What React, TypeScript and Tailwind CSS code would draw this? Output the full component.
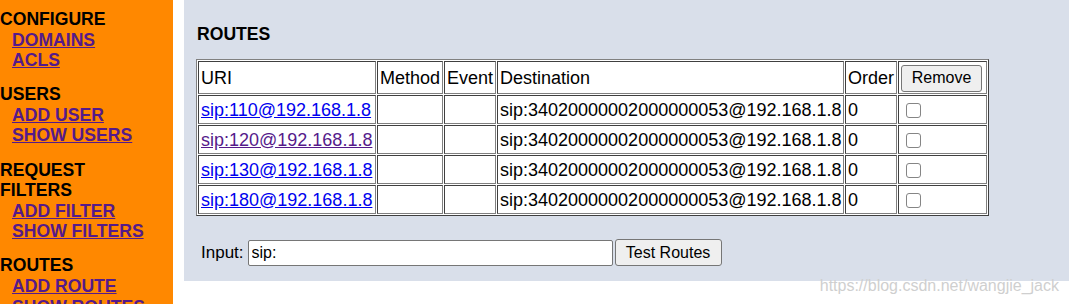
import React from 'react';

const groups = [
  { title: ['CONFIGURE'], links: ['DOMAINS', 'ACLS'] },
  { title: ['USERS'], links: ['ADD USER', 'SHOW USERS'] },
  { title: ['REQUEST', 'FILTERS'], links: ['ADD FILTER', 'SHOW FILTERS'] },
  { title: ['ROUTES'], links: ['ADD ROUTE', 'SHOW ROUTES'] },
];

const routes = [
  { uri: 'sip:110@192.168.1.8', visited: false },
  { uri: 'sip:120@192.168.1.8', visited: true },
  { uri: 'sip:130@192.168.1.8', visited: false },
  { uri: 'sip:180@192.168.1.8', visited: false },
];

const dest = 'sip:34020000002000000053@192.168.1.8';

// inset grey borders, like an old border=1 table
const cell = 'border border-t-[#404040] border-l-[#404040] border-r-[#808080] border-b-[#808080] bg-white px-[2px] py-0 align-middle';

export default function App() {
  return (
    <div className="relative flex h-[304px] w-[1069px] overflow-hidden bg-white font-['Liberation_Sans',Arial,sans-serif] text-black">
      <nav className="w-[173px] shrink-0 bg-[#ff8800] pt-[9px] text-[17.6px] font-bold leading-[20.6px]">
        {groups.map((g, i) => (
          <div key={i} className={i > 0 ? 'mt-[13.5px]' : ''}>
            {g.title.map(t => <div key={t}>{t}</div>)}
            {g.links.map(l => (
              <div key={l} className="pl-[12px]">
                <a href="#" className="text-[#551a8b] underline">{l}</a>
              </div>
            ))}
          </div>
        ))}
      </nav>

      <main className="ml-[11px] h-[281px] flex-1 bg-[#d9dfea] pl-[12px] pt-[24px]">
        <h2 className="ml-[1px] text-[17.6px] font-bold leading-[20px]">ROUTES</h2>

        <table className="mt-[15px] w-[793px] table-fixed border-separate border-spacing-[1px] border border-t-[#808080] border-l-[#808080] border-r-[#404040] border-b-[#404040] bg-white text-[18px] leading-[20px]">
          <tbody>
            <tr className="h-[33px]">
              <td className={`${cell} w-[178px]`}>URI</td>
              <td className={`${cell} w-[66px]`}>Method</td>
              <td className={`${cell} w-[52px]`}>Event</td>
              <td className={`${cell} w-[347px]`}>Destination</td>
              <td className={`${cell} w-[52px]`}>Order</td>
              <td className={`${cell} w-[89px]`}>
                <button className="mt-[1px] h-[27px] w-[81px] rounded-[3px] border border-[#767676] bg-[#efefef] text-[16px] leading-none">Remove</button>
              </td>
            </tr>
            {routes.map(r => (
              <tr key={r.uri} className="h-[29px]">
                <td className={cell}>
                  <a href="#" className={`underline ${r.visited ? 'text-[#551a8b]' : 'text-[#0000ee]'}`}>{r.uri}</a>
                </td>
                <td className={cell}></td>
                <td className={cell}></td>
                <td className={cell}>{dest}</td>
                <td className={cell}>0</td>
                <td className={cell}>
                  <span className="ml-[5px] mt-[1px] block h-[15px] w-[15px] rounded-[3px] border border-[#858585] bg-white" />
                </td>
              </tr>
            ))}
          </tbody>
        </table>

        <div className="mt-[23px] flex h-[27px] items-center pl-[5px]">
          <span className="text-[17px]">Input:</span>
          <input
            defaultValue="sip:"
            className="ml-[4px] h-[26px] w-[365px] rounded-[2px] border border-[#767676] bg-white px-[3px] text-[16px] outline-none"
          />
          <button className="ml-[2px] h-[27px] w-[107px] rounded-[3px] border border-[#767676] bg-[#efefef] text-[16px] leading-none">Test Routes</button>
        </div>
      </main>

      <div className="absolute right-[10px] top-[277px] text-[16px] leading-[18px] text-[#cfcfcf]">https://blog.csdn.net/wangjie_jack</div>
    </div>
  );
}
